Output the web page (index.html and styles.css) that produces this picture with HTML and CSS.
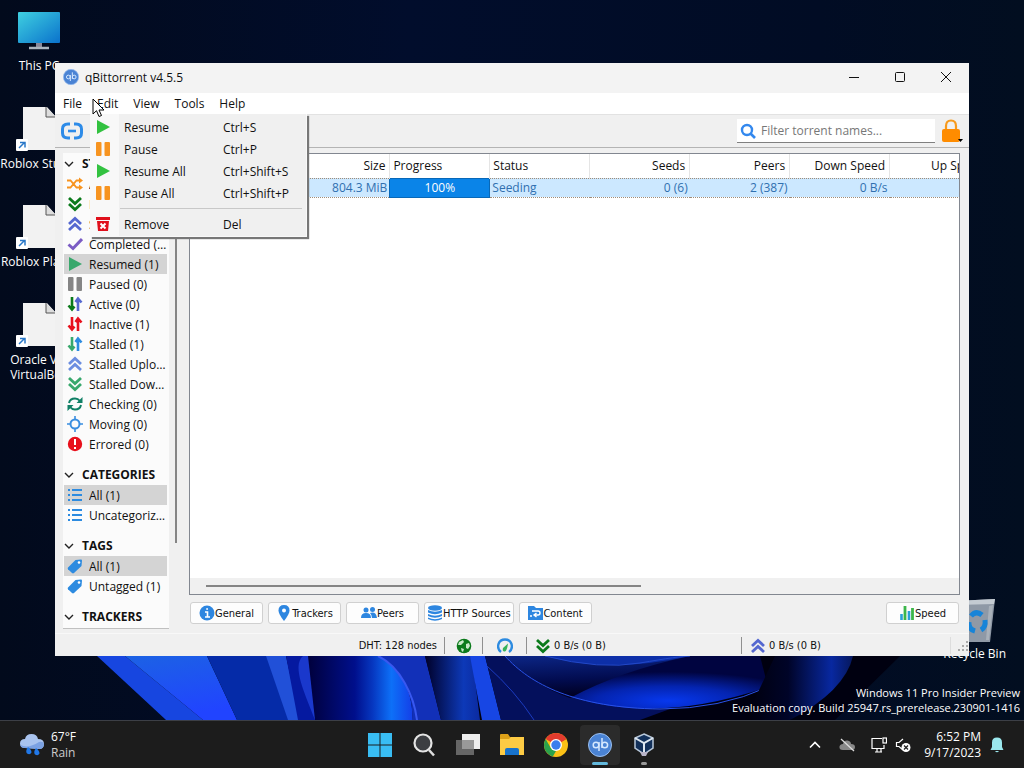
FILE: index.html
```html
<!DOCTYPE html>
<html lang="en">
	<head>
		<title>qBittorrent v4.5.5</title>
		<meta charset="utf-8"/>
		<link rel="stylesheet" href="styles.css">
	</head>
	<body>

		<!-- shared icons -->
		<svg class="sprite">
			<symbol id="play" viewBox="0 0 16 16"><path d="M2 1L15 8L2 15z" fill="currentColor"/></symbol>
			<symbol id="pause" viewBox="0 0 16 16"><rect x="1" y="1" width="5.500" height="14" rx="1" fill="currentColor"/><rect x="9.500" y="1" width="5.500" height="14" rx="1" fill="currentColor"/></symbol>
			<symbol id="ups" viewBox="0 0 16 16"><path d="M2 8l6-5.5L14 8M2 14l6-5.5 6 5.5" fill="none" stroke="currentColor" stroke-width="2.8"/></symbol>
			<symbol id="downs" viewBox="0 0 16 16"><path d="M2 2l6 5.500L14 2M2 8l6 5.500 6-5.500" fill="none" stroke="currentColor" stroke-width="2.800"/></symbol>
			<symbol id="arrow-down" viewBox="0 0 16 16"><path d="M5 1v12M1.500 9.500L5 13.500l2.500-3" fill="none" stroke="currentColor" stroke-width="2.600"/></symbol>
			<symbol id="arrow-up" viewBox="0 0 16 16"><path d="M11 15V3M8.500 6L11 2.500l3.500 4" fill="none" stroke="currentColor" stroke-width="2.600"/></symbol>
			<symbol id="list" viewBox="0 0 16 16"><path d="M1 3h2M5 3h10M1 8h2M5 8h10M1 13h2M5 13h10" stroke="currentColor" stroke-width="1.800"/></symbol>
			<symbol id="tag" viewBox="0 0 16 16"><path d="M1 9.500L8.500 2 14 1.500q1 0 1 1L14.500 8 7 15q-1 .8-2 0L1 11.200q-.7-.8 0-1.700z" fill="currentColor"/><circle cx="12" cy="4.500" r="1.300" fill="#fff"/></symbol>
			<symbol id="fold" viewBox="0 0 10 10"><path d="M1 3l4 4 4-4" fill="none" stroke="#222" stroke-width="1.400"/></symbol>
			<symbol id="file" viewBox="0 0 46 46">
				<path d="M7 1h24l9 10v33H7z" fill="#f2f2f2"/><path d="M30 1v10h10" fill="#ddd" stroke="#555"/>
				<rect x="0" y="33" width="12" height="12" rx="1" fill="#fff"/><path d="M3 42l5-5M4 36.500h5v5" fill="none" stroke="#2a78c8" stroke-width="1.500"/>
			</symbol>
			<symbol id="qb" viewBox="0 0 24 24">
				<circle cx="12" cy="12" r="11.500" fill="#4a83d4" stroke="#9cc0f0"/>
				<g fill="none" stroke="#d5e8ff" stroke-width="1.500"><circle cx="8" cy="12" r="2.800"/><path d="M11 9v9M14 5v10"/><circle cx="16.800" cy="12" r="2.800"/></g>
			</symbol>
		</svg>

		<main class="desktop">
			<svg class="wallpaper" viewBox="0 0 1024 64" preserveAspectRatio="none">
				<defs>
					<linearGradient id="g1" x1="0" y1="0" x2="0.300" y2="1"><stop offset="0" stop-color="#1c62e4"/><stop offset="1" stop-color="#2144ff"/></linearGradient>
					<linearGradient id="g2"><stop offset="0" stop-color="#00003c"/><stop offset="0.450" stop-color="#000f8c"/><stop offset="0.620" stop-color="#0637c0"/><stop offset="0.800" stop-color="#0d70f8"/><stop offset="1" stop-color="#1440e8"/></linearGradient>
					<linearGradient id="g3"><stop offset="0" stop-color="#000028"/><stop offset="0.700" stop-color="#0d39b8"/><stop offset="1" stop-color="#0b2aa0"/></linearGradient>
					<linearGradient id="g4" x1="0" y1="0" x2="0.200" y2="1"><stop offset="0" stop-color="#0c2686"/><stop offset="0.600" stop-color="#020c50"/><stop offset="1" stop-color="#000020"/></linearGradient>
					<radialGradient id="g5" cx="0.620" cy="0.850" r="0.550"><stop offset="0" stop-color="#0738ee"/><stop offset="0.500" stop-color="#0424b0"/><stop offset="1" stop-color="#000440"/></radialGradient>
					<linearGradient id="g6"><stop offset="0" stop-color="#00000c"/><stop offset="0.400" stop-color="#000428"/><stop offset="0.800" stop-color="#0828a0"/><stop offset="1" stop-color="#06185c"/></linearGradient>
				</defs>
				<path d="M97 0H900L835 64H166z" fill="#000010"/>
				<path d="M97 0H125L203 64H166z" fill="#1746e0"/>
				<path d="M125 0H207L237 64H203z" fill="url(#g1)"/>
				<path d="M207 0H268L289 64H237z" fill="#052ba8"/>
				<path d="M266 0H286L300 64H288z" fill="#2150d8"/>
				<path d="M286 0H310L316 64H298z" fill="#0519a0"/>
				<path d="M310 0H303C291 10 306 40 315 64H330z" fill="#1a38cc"/>
				<path d="M308 0H378C404 12 414 42 412 64H315z" fill="url(#g2)"/>
				<path d="M378 0H425L441 64H412C414 42 404 12 378 0z" fill="#1230b8"/>
				<path d="M378 0C400 10 414 40 417 64" fill="none" stroke="#3858f0" stroke-width="2"/>
				<path d="M425 0H472L480 64H441z" fill="url(#g3)"/>
				<path d="M470 0H485L501 64H482z" fill="#1746e4"/>
				<path d="M485 0H505C560 48 640 53 670 53L640 64H501z" fill="#04105c"/>
				<path d="M487 10Q515 35 534 64" fill="none" stroke="#1b3bbf"/>
				<path d="M505 0H760L768 31Q660 68 575 42 530 28 505 0z" fill="url(#g5)"/>
				<path d="M505 0H690Q620 15 570 42 530 28 505 0z" fill="url(#g4)"/>
				<path d="M545 0Q610 18 690 0z" fill="#0d2fa8"/>
				<path d="M505 0C530 28 575 52 660 53Q720 53 768 31" fill="none" stroke="#2952e8"/>
				<path d="M545 0Q600 14 640 7T690 0" fill="none" stroke="#2248c8"/>
				<path d="M775 0H853Q845 35 790 64H745z" fill="url(#g6)"/>
			</svg>

			<ul class="shortcuts">
				<li>
					<svg viewBox="0 0 46 46"><defs><linearGradient id="pc" x2="1" y2="1"><stop offset="0" stop-color="#3fd0e0"/><stop offset="1" stop-color="#0a72cc"/></linearGradient></defs><rect x="2" y="4" width="42" height="31" rx="1" fill="url(#pc)"/><path d="M20 35h6v4h-6z" fill="#889"/><path d="M13 40h20" stroke="#aab4be" stroke-width="2.500"/></svg>
					<span>This PC</span>
				</li>
				<li><svg><use href="#file"/></svg><span>Roblox Studio</span></li>
				<li><svg><use href="#file"/></svg><span>Roblox Player</span></li>
				<li><svg><use href="#file"/></svg><span>Oracle VM<br/>VirtualBox</span></li>
			</ul>

			<div class="recycle">
				<svg viewBox="0 0 48 46"><path d="M4 3l40-2-5 43H10z" fill="#8f99a6"/><path d="M4 3l40-2-1 5-38 1z" fill="#c4cbd2"/><path d="M38 8l4-1-4 35h-3z" fill="#a9b1ba"/><g fill="none" stroke="#1784d8" stroke-width="5"><path d="M20 18q5-6 11-1M34 22q1 7-4 10M24 33q-7-2-6-9"/></g></svg>
				<span>Recycle Bin</span>
			</div>

			<p class="watermark">Windows 11 Pro Insider Preview<br/>Evaluation copy. Build 25947.rs_prerelease.230901-1416</p>

			<section class="window">
				<header class="titlebar">
					<svg class="icon"><use href="#qb"/></svg>
					<h1>qBittorrent v4.5.5</h1>
					<button aria-label="Minimize"><svg viewBox="0 0 12 12"><path d="M1 6.500h10" stroke="#111"/></svg></button>
					<button aria-label="Maximize"><svg viewBox="0 0 12 12"><rect x="1.500" y="1.500" width="9" height="9" rx="1" fill="none" stroke="#111"/></svg></button>
					<button aria-label="Close"><svg viewBox="0 0 12 12"><path d="M1 1l10 10M11 1L1 11" stroke="#111"/></svg></button>
				</header>

				<nav class="menubar">
					<button>File</button>
					<button>Edit</button>
					<button>View</button>
					<button>Tools</button>
					<button>Help</button>
				</nav>

				<div class="toolbar">
					<button class="link" aria-label="Add torrent link"><svg viewBox="0 0 24 20"><path d="M10 3H8Q2.500 3 2.500 8v4q0 5 5.500 5h2M14 3h2q5.500 0 5.500 5v4q0 5-5.500 5h-2" fill="none" stroke="#2d8be8" stroke-width="3"/><path d="M8 10h8" stroke="#2d8be8" stroke-width="2.600"/></svg></button>
					<label class="search">
						<svg viewBox="0 0 16 16"><circle cx="7" cy="7" r="5" fill="none" stroke="#3388ee" stroke-width="2.400"/><path d="M10.500 10.500l4.500 4.500" stroke="#3388ee" stroke-width="2.600"/></svg>
						<input type="text" placeholder="Filter torrent names..." aria-label="Filter torrent names">
					</label>
					<button class="lock" aria-label="Lock"><svg viewBox="0 0 22 24"><path d="M5 12V7q0-5.500 5-5.500T15 7v5" fill="none" stroke="#f79a1c" stroke-width="2.200"/><rect x="1" y="10" width="18" height="13" rx="2" fill="#ff8c00"/><path d="M17 20h5l-2.500 3z" fill="#000"/></svg></button>
				</div>

				<div class="content">
					<aside class="sidebar">
						<div class="filters">
							<h2><svg><use href="#fold"/></svg>STATUS</h2>
							<ul>
								<li><button><svg viewBox="0 0 16 16"><path d="M0 4.500h3.500l6 7H13M0 11.500h3.500l6-7H13" fill="none" stroke="#f7931e" stroke-width="1.800"/><path d="M12 1.500l4 3-4 3zM12 8.500l4 3-4 3z" fill="#f7931e"/></svg><span>All (1)</span></button></li>
								<li><button><svg class="green"><use href="#downs"/></svg><span>Downloading (0)</span></button></li>
								<li><button><svg class="indigo"><use href="#ups"/></svg><span>Seeding (1)</span></button></li>
								<li><button><svg viewBox="0 0 16 16"><path d="M1.500 8.500L6 12.500 15 3" fill="none" stroke="#7b5cc4" stroke-width="3"/></svg><span>Completed (1)</span></button></li>
								<li><button class="selected"><svg class="sea"><use href="#play"/></svg><span>Resumed (1)</span></button></li>
								<li><button><svg class="gray"><use href="#pause"/></svg><span>Paused (0)</span></button></li>
								<li><button><svg viewBox="0 0 16 16"><use href="#arrow-down" class="green"/><use href="#arrow-up" class="indigo"/></svg><span>Active (0)</span></button></li>
								<li><button><svg viewBox="0 0 16 16" class="red"><use href="#arrow-down"/><use href="#arrow-up"/></svg><span>Inactive (1)</span></button></li>
								<li><button><svg viewBox="0 0 16 16"><use href="#arrow-down" class="sea"/><use href="#arrow-up" class="blue"/></svg><span>Stalled (1)</span></button></li>
								<li><button><svg class="sky"><use href="#ups"/></svg><span>Stalled Uploading (1)</span></button></li>
								<li><button><svg class="sea"><use href="#downs"/></svg><span>Stalled Downloading (0)</span></button></li>
								<li><button><svg viewBox="0 0 16 16"><path d="M2 7Q3 2.500 8 2.500q3 0 5 2.500M14 9q-1 4.500-6 4.500-3 0-5-2.500" fill="none" stroke="#118066" stroke-width="2"/><path d="M15.500 1v6h-6zM.5 15V9h6z" fill="#118066"/></svg><span>Checking (0)</span></button></li>
								<li><button><svg viewBox="0 0 16 16"><circle cx="8" cy="8" r="4.500" fill="none" stroke="#3a8ee0" stroke-width="2"/><path d="M8 0v4M8 12v4M0 8h4M12 8h4" stroke="#3a8ee0" stroke-width="1.600"/></svg><span>Moving (0)</span></button></li>
								<li><button><svg viewBox="0 0 16 16"><circle cx="8" cy="8" r="7.200" fill="#e8101c"/><path d="M8 3v6M8 11v2" stroke="#fff" stroke-width="2"/></svg><span>Errored (0)</span></button></li>
							</ul>
							<h2><svg><use href="#fold"/></svg>CATEGORIES</h2>
							<ul>
								<li><button class="selected"><svg class="blue"><use href="#list"/></svg><span>All (1)</span></button></li>
								<li><button><svg class="blue"><use href="#list"/></svg><span>Uncategorized (1)</span></button></li>
							</ul>
							<h2><svg><use href="#fold"/></svg>TAGS</h2>
							<ul>
								<li><button class="selected"><svg class="blue"><use href="#tag"/></svg><span>All (1)</span></button></li>
								<li><button><svg class="blue"><use href="#tag"/></svg><span>Untagged (1)</span></button></li>
							</ul>
							<h2><svg><use href="#fold"/></svg>TRACKERS</h2>
						</div>
						<div class="side-scroll"></div>
					</aside>

					<div class="main">
						<div class="torrents">
							<table>
								<thead>
									<tr><th></th><th class="num">Size</th><th>Progress</th><th>Status</th><th class="num">Seeds</th><th class="num">Peers</th><th class="num">Down Speed</th><th class="num">Up Speed</th></tr>
								</thead>
								<tbody>
									<tr><td></td><td class="num">804.3 MiB</td><td class="progress">100%</td><td>Seeding</td><td class="num">0 (6)</td><td class="num">2 (387)</td><td class="num">0 B/s</td><td></td></tr>
								</tbody>
							</table>
							<div class="table-scroll"><div></div></div>
						</div>
						<div class="tabs">
							<button><svg viewBox="0 0 16 16"><circle cx="8" cy="8" r="7.500" fill="#2d86e0"/><path d="M6 7h2.500v5M6 12h5M7.200 4h1.800" fill="none" stroke="#fff" stroke-width="1.600"/></svg>General</button>
							<button><svg viewBox="0 0 16 16"><path d="M8 0q5.500 0 5.500 5.500Q13.500 9 8 16 2.500 9 2.500 5.500 2.500 0 8 0z" fill="#2d86e0"/><circle cx="8" cy="5.500" r="2" fill="#fff"/></svg>Trackers</button>
							<button><svg viewBox="0 0 16 16" fill="#2d86e0"><circle cx="5" cy="5" r="2.500"/><circle cx="11.500" cy="4.500" r="2.500"/><path d="M0 13q0-5 5-5t5 5zM9 8q6-2 7 5h-5q0-3-2-5z"/></svg>Peers</button>
							<button><svg viewBox="0 0 16 16" fill="#2d86e0"><ellipse cx="8" cy="3" rx="7" ry="2.700"/><path d="M1 5q7 3.500 14 0v2.500q-7 3.500-14 0zM1 9q7 3.500 14 0v2q-7 3.500-14 0zM1 12.500q7 3.500 14 0v1.500q-7 3.500-14 0z"/></svg>HTTP Sources</button>
							<button><svg viewBox="0 0 16 16"><path d="M1 1h6l2 2h7v12H1z" fill="#2d86e0"/><path d="M5 6h6q2 0 2 2t-2 2H8M3 11h2M9.500 8L7 10l2.500 2" fill="none" stroke="#fff" stroke-width="1.400"/></svg>Content</button>
							<button class="speed"><svg viewBox="0 0 16 16"><path d="M2.500 9v6M10 6v9" stroke="#2aa0d8" stroke-width="2.600"/><path d="M6 1v14M13.500 3v12" stroke="#3cb64a" stroke-width="2.800"/></svg>Speed</button>
						</div>
					</div>
				</div>

				<footer class="statusbar">
					<span class="dht">DHT: 128 nodes</span>
					<span class="cell"><svg viewBox="0 0 16 16"><circle cx="8" cy="8" r="7.300" fill="#0b7a1b"/><path d="M3 4l4-2 1 2-3 3-3 0zM10 6l3-1 1 3-2 3-2-1zM5 10l3 1-1 3q-2-1-2-4z" fill="#c8e8c8"/></svg></span>
					<span class="cell wide"><svg viewBox="0 0 16 16"><path d="M4 14Q0 11 1.500 6 3 1.500 8 1.500T14.500 6Q16 11 12 14" fill="none" stroke="#2d8be0" stroke-width="2.400"/><path d="M6 10q-1 4 2 3.500 2-.5 3-8z" fill="#36b35a"/></svg></span>
					<span class="cell rate down"><svg class="green"><use href="#downs"/></svg>0 B/s (0 B)</span>
					<span class="cell rate up"><svg class="indigo"><use href="#ups"/></svg>0 B/s (0 B)</span>
					<span class="cell grip"><svg viewBox="0 0 12 12" fill="#aaa"><path d="M9 1h2v2H9zM5 5h2v2H5zM9 5h2v2H9zM1 9h2v2H1zM5 9h2v2H5zM9 9h2v2H9z"/></svg></span>
				</footer>

				<div class="menu" role="menu">
					<button role="menuitem"><svg class="lime"><use href="#play"/></svg><span>Resume</span><kbd>Ctrl+S</kbd></button>
					<button role="menuitem"><svg class="orange"><use href="#pause"/></svg><span>Pause</span><kbd>Ctrl+P</kbd></button>
					<button role="menuitem"><svg class="lime"><use href="#play"/></svg><span>Resume All</span><kbd>Ctrl+Shift+S</kbd></button>
					<button role="menuitem"><svg class="orange"><use href="#pause"/></svg><span>Pause All</span><kbd>Ctrl+Shift+P</kbd></button>
					<hr>
					<button role="menuitem"><svg viewBox="0 0 16 16"><path d="M1 1h14v3H1zM2 5h12l-1 10H3z" fill="#e0101c"/><path d="M5.500 7.500l5 5M10.500 7.500l-5 5" stroke="#fff" stroke-width="2"/></svg><span>Remove</span><kbd>Del</kbd></button>
				</div>
			</section>

			<svg class="cursor" viewBox="0 0 13 20"><path d="M1 1v15l3.500-3.300L7 18.500l2.500-1-2.500-5.500h5z" fill="#fff" stroke="#000"/></svg>
		</main>

		<footer class="taskbar">
			<button class="weather">
				<svg viewBox="0 0 26 24"><path d="M6 15Q1 15 1 10.500T6 6q1-5 6.500-5T19 6q6 0 6 5t-5 5z" fill="#a9c3ee"/><path d="M6 15q-4 0-4.500-3Q9 16 20 9q4-1 5 2 0 5-5 5z" fill="#7ba1e2"/><path d="M9 14q-3 4-1 6.500 3 2 4.500-1 0-3-3.500-5.500zM17 15q-3 4-1 6.500 3 2 4.500-1 0-3-3.500-5.500z" fill="#2178e8"/></svg>
				<span>67°F<br/><small>Rain</small></span>
			</button>

			<div class="apps">
				<button aria-label="Start"><svg viewBox="0 0 24 24" fill="#39bdf3"><path d="M0 0h11.500v11.500H0zM12.500 0H24v11.500H12.500zM0 12.500h11.500V24H0zM12.500 12.500H24V24H12.500z"/></svg></button>
				<button aria-label="Search"><svg viewBox="0 0 24 24"><circle cx="11" cy="10" r="8.500" fill="#3c3e42" stroke="#e4e4e4" stroke-width="2.200"/><path d="M17 17l5 5.500" stroke="#ddd" stroke-width="2.600"/></svg></button>
				<button aria-label="Task view"><svg viewBox="0 0 24 24"><path d="M6 1h18v15H6z" fill="#eee"/><path d="M0 7h18v15H0z" fill="#666"/><path d="M6 7h12v9H6z" fill="#999"/></svg></button>
				<button aria-label="File Explorer"><svg viewBox="0 0 24 24"><path d="M0 2q0-1 1-1h7l2 3h13l1 1v6H0z" fill="#dca018"/><path d="M0 6h9l2-2h13v18H0z" fill="#fdcb44"/><path d="M5 22v-5q0-2 2-2h10q2 0 2 2v5z" fill="#1873cc"/></svg></button>
				<button aria-label="Chrome"><svg viewBox="0 0 24 24"><circle cx="12" cy="12" r="12" fill="#fbc116"/><path d="M12 12L1.600 6Q5 0 12 0t10.400 6z" fill="#e33b2e"/><path d="M12 6h10.400L12 12z" fill="#e33b2e"/><path d="M1.600 6L6.800 15l5.200 3-3.200 5.600Q0 20 0 12q0-3 1.600-6z" fill="#2ba24c"/><circle cx="12" cy="12" r="6" fill="#fff"/><circle cx="12" cy="12" r="4.700" fill="#3b7ded"/></svg></button>
				<button class="active" aria-label="qBittorrent"><svg><use href="#qb"/></svg></button>
				<button class="running" aria-label="VirtualBox"><svg viewBox="0 0 24 24"><path d="M12 1l9 4v10l-9 6-9-6V5z" fill="#12305a" stroke="#b8c8da" stroke-width="1.500"/><path d="M3 5l9 5 9-5M12 10v11" fill="none" stroke="#dce6f0" stroke-width="2"/><path d="M8 19h8l-2 4h-4z" fill="#b8b4c8"/></svg></button>
			</div>

			<div class="tray">
				<svg viewBox="0 0 16 16"><path d="M3 10.500l5-5 5 5" fill="none" stroke="#fff" stroke-width="1.600"/></svg>
				<svg class="cloud" viewBox="0 0 16 16"><path d="M4 13Q0 13 .5 9.500 1 7 4 7q1-4 4.500-3.500T12 7q4 0 4 3t-3 3z" fill="#888"/><path d="M2 2l13 12" stroke="#ddd" stroke-width="1.300"/></svg>
				<svg viewBox="0 0 16 16" fill="none" stroke="#fff" stroke-width="1.200"><path d="M11 1.500H1v10h12V8M4 15h7M6 12v3M10 12v3"/><rect x="12" y="1" width="3.500" height="5"/></svg>
				<svg viewBox="0 0 16 16"><path d="M8 2L4 5.500H1.500v4H4L8 13" fill="none" stroke="#fff" stroke-width="1.200"/><circle cx="11" cy="10.500" r="4.500" fill="#fff"/><path d="M9 8.500l4 4M13 8.500l-4 4" stroke="#222" stroke-width="1.300"/></svg>
				<time>6:52 PM<br/>9/17/2023</time>
				<svg viewBox="0 0 16 16" fill="#9be8ee"><path d="M8 .5q5 0 5 5V10l1.500 3h-13L3 10V5.500q0-5 5-5zM6 14h4q-2 2.500-4 0z"/></svg>
			</div>
		</footer>

	</body>
</html>
```

FILE: styles.css
```css
* {
	box-sizing: border-box;
}

body {
	margin: 0;
	height: 100vh;
	display: flex;
	flex-direction: column;
	overflow: hidden;
	background-color: #020a1c;
	color: #111;
	font-family: "Open Sans", "Noto Sans", sans-serif;
	font-size: 12px;
	line-height: 15px;
}

button {
	padding: 0;
	border: none;
	background: none;
	color: inherit;
	font: inherit;
}

svg {
	display: block;
	flex: none;
	width: 16px;
	height: 16px;
}

h1, h2, p, ul {
	margin: 0;
	padding: 0;
	list-style: none;
}

.sprite {
	position: absolute;
	width: 0;
	height: 0;
}

.green { color: #0b7a1b; }
.indigo { color: #5568d0; }
.sea { color: #38a86c; }
.gray { color: #858585; }
.red { color: #e8101c; }
.blue { color: #2d8be0; }
.sky { color: #6c8ee0; }
.lime { color: #32c240; }
.orange { color: #f79420; }

/* ---------- desktop ---------- */
.desktop {
	flex: 1;
	position: relative;
	overflow: hidden;
	background: linear-gradient(90deg, #020a1c, #010d2c 40%, #010c24 80%, #020e20);
}
.wallpaper {
	position: absolute;
	left: 0;
	bottom: 0;
	width: 100%;
	height: 64px;
}

.shortcuts {
	position: absolute;
	left: 0;
	top: 8px;
	width: 78px;
	color: #fff;
	text-align: center;
}
.shortcuts li {
	height: 98px;
	display: flex;
	flex-direction: column;
	align-items: center;
	gap: 4px;
	white-space: nowrap;
}
.shortcuts svg {
	width: 46px;
	height: 46px;
}

.recycle {
	position: absolute;
	right: 18px;
	bottom: 59px;
	color: #fff;
	text-align: center;
}
.recycle svg {
	width: 48px;
	height: 46px;
	margin: 0 auto 2px;
}

.watermark {
	position: absolute;
	right: 4px;
	bottom: 5px;
	color: #fff;
	font-size: 11px;
	text-align: right;
}

.cursor {
	position: absolute;
	left: 92px;
	top: 98px;
	width: 13px;
	height: 20px;
}

/* ---------- window ---------- */
.window {
	position: absolute;
	top: 63px;
	right: 55px;
	bottom: 64px;
	left: 55px;
	display: flex;
	flex-direction: column;
	background-color: #f0f0f0;
}

.titlebar {
	height: 30px;
	padding: 0 0 2px 8px;
	display: flex;
	align-items: center;
	background-color: #f3f3f3;
}
.titlebar h1 {
	flex: 1;
	margin-left: 6px;
	font-size: 12px;
	font-weight: normal;
}
.titlebar button {
	width: 46px;
	height: 28px;
	display: flex;
	align-items: center;
	justify-content: center;
}
.titlebar button svg {
	width: 12px;
	height: 12px;
}

.menubar {
	height: 21px;
	padding-left: 8px;
	display: flex;
	gap: 15px;
	background-color: #fff;
}

.toolbar {
	height: 34px;
	padding: 0 6px 0 5px;
	display: flex;
	align-items: center;
	border-top: 1px solid #e2e2e2;
	border-bottom: 1px solid #b4b4b4;
}
.link svg {
	width: 24px;
	height: 20px;
}
.search {
	width: 198px;
	height: 24px;
	margin-left: auto;
	padding-left: 3px;
	display: flex;
	align-items: center;
	background-color: #fff;
	border-bottom: 1px solid #808080;
}
.search input {
	flex: 1;
	min-width: 0;
	padding: 0 5px;
	border: none;
	outline: none;
	background: none;
	font: inherit;
}
.search input::placeholder {
	color: #777;
}
.lock {
	margin-left: 6px;
}
.lock svg {
	width: 22px;
	height: 24px;
}

.content {
	flex: 1;
	min-height: 0;
	padding: 5px 9px 0 8px;
	display: flex;
}

/* ---------- sidebar ---------- */
.sidebar {
	width: 126px;
	height: 476px;
	display: flex;
	overflow: hidden;
}
.filters {
	width: 106px;
	padding: 0 2px 0 1px;
	background-color: #fbfbfb;
	border-bottom: 1px solid #c0c0c0;
}
.filters h2 {
	height: 21px;
	display: flex;
	align-items: center;
	gap: 8px;
	font-size: 12px;
	font-weight: bold;
}
.filters h2 svg {
	width: 10px;
	height: 10px;
}
.filters ul {
	margin-bottom: 10px;
}
.filters button {
	width: 100%;
	height: 20px;
	padding-left: 3px;
	display: flex;
	align-items: center;
	gap: 6px;
	text-align: left;
}
.filters button span {
	flex: 1;
	min-width: 0;
	overflow: hidden;
	text-overflow: ellipsis;
	white-space: nowrap;
}
.filters .selected {
	background-color: #d4d4d4;
}
.side-scroll {
	width: 2px;
	height: 390px;
	margin-left: 6px;
	background-color: #858585;
}

/* ---------- torrent list ---------- */
.main {
	flex: 1;
	min-width: 0;
	display: flex;
	flex-direction: column;
}
.torrents {
	flex: 1;
	display: flex;
	flex-direction: column;
	overflow: hidden;
	background-color: #fff;
	border: 1px solid #828790;
}
table {
	width: 800px;
	table-layout: fixed;
	border-collapse: collapse;
}
th, td {
	padding: 0 4px;
	text-align: left;
	font-weight: normal;
	white-space: nowrap;
}
th {
	height: 24px;
	padding-left: 3px;
	border-right: 1px solid #e5e5e5;
}
td {
	height: 19px;
	padding: 0 2px;
	background-color: #cce8ff;
	border-top: 1px dotted #a08c78;
	border-bottom: 1px dotted #a08c78;
	color: #3070b0;
}
.num {
	text-align: right;
}
.progress {
	background-color: #0a84e8;
	border: 1px solid #0868b8;
	color: #fff;
	text-align: center;
}
.table-scroll {
	height: 16px;
	margin-top: auto;
	padding: 7px 16px;
	background-color: #f0f0f0;
}
.table-scroll div {
	width: 59%;
	height: 2px;
	background-color: #858585;
}

.tabs {
	height: 38px;
	padding: 7px 1px 0;
	display: flex;
	gap: 5px;
	font-family: "DejaVu Sans Condensed", sans-serif;
	font-size: 11px;
}
.tabs button {
	min-width: 73px;
	height: 22px;
	padding: 0 2px;
	display: flex;
	align-items: center;
	justify-content: center;
	background-color: #fdfdfd;
	border: 1px solid #d0d0d0;
	border-radius: 3px;
}
.tabs .speed {
	margin-left: auto;
}

/* ---------- status bar ---------- */
.statusbar {
	height: 23px;
	padding-top: 1px;
	display: flex;
	align-items: center;
	border-top: 1px solid #f8f8f8;
	font-family: "DejaVu Sans Condensed", sans-serif;
	font-size: 11px;
}
.dht {
	flex: 1;
	padding-right: 7px;
	text-align: right;
}
.cell {
	width: 38px;
	height: 17px;
	display: flex;
	align-items: center;
	justify-content: center;
	border-left: 1px solid #909090;
}
.wide {
	width: 44px;
}
.rate {
	padding-left: 8px;
	gap: 3px;
	justify-content: flex-start;
}
.down {
	width: 215px;
}
.up {
	width: 209px;
}
.grip {
	width: 19px;
	justify-content: flex-end;
	border-color: #ddd;
}
.grip svg {
	width: 12px;
	height: 12px;
}

/* ---------- edit menu ---------- */
.menu {
	position: absolute;
	left: 35px;
	top: 51px;
	width: 217px;
	padding: 2px 4px 1px 1px;
	background: linear-gradient(90deg, #f8f8f8 28px, #f0f0f0 28px);
	border: 1px solid #f8f8f8;
	border-top: none;
	box-shadow: 2px 2px 1px #777;
}
.menu button {
	width: 100%;
	height: 22px;
	padding-left: 3px;
	display: flex;
	align-items: center;
	text-align: left;
}
.menu span {
	width: 99px;
	margin-left: 13px;
}
.menu kbd {
	font: inherit;
}
.menu hr {
	height: 1px;
	margin: 4px 0 4px 28px;
	border: none;
	background-color: #c8c8c8;
}

/* ---------- taskbar ---------- */
.taskbar {
	height: 48px;
	padding: 0 19px;
	display: grid;
	grid-template-columns: 1fr auto 1fr;
	align-items: center;
	background-color: #1c1c1c;
	border-top: 1px solid #3c3f46;
	color: #fff;
}
.weather {
	display: flex;
	align-items: center;
	gap: 6px;
	text-align: left;
	line-height: 16px;
}
.weather svg {
	width: 26px;
	height: 24px;
}
.weather small {
	color: #ccc;
	font-size: 12px;
}
.apps {
	display: flex;
	gap: 4px;
}
.apps button {
	position: relative;
	width: 40px;
	height: 40px;
	display: flex;
	align-items: center;
	justify-content: center;
	border-radius: 4px;
}
.apps svg {
	width: 24px;
	height: 24px;
}
.apps .active {
	background-color: #2b2b2b;
}
.active::after, .running::after {
	content: "";
	position: absolute;
	bottom: 0;
	width: 16px;
	height: 3px;
	border-radius: 2px;
	background-color: #62b8dc;
}
.running::after {
	width: 6px;
	background-color: #999;
}
.tray {
	display: flex;
	align-items: center;
	justify-content: flex-end;
	gap: 8px;
}
.tray .cloud {
	margin: 0 8px;
}
.tray time {
	margin-left: 5px;
	line-height: 16px;
	text-align: right;
}
```
